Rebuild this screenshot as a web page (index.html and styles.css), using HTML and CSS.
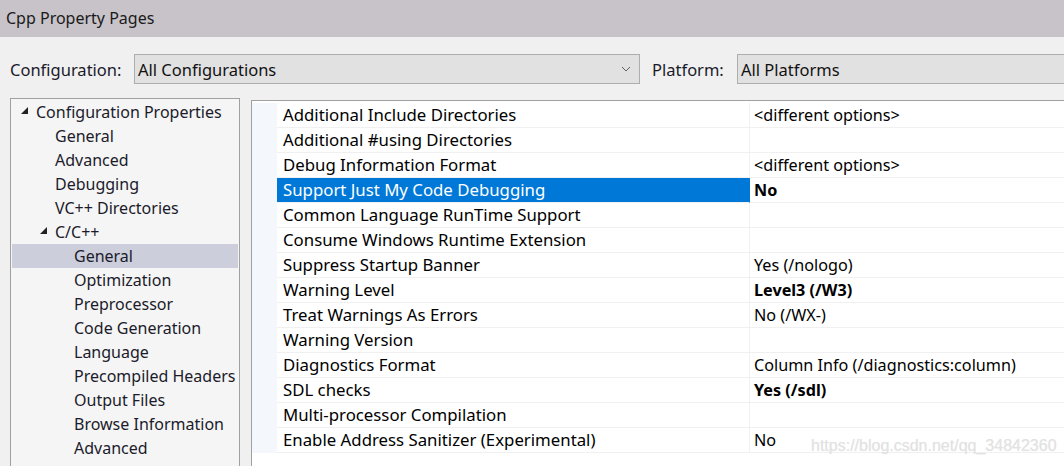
FILE: index.html
```html
<!DOCTYPE html>
<html>
<head>
<meta charset="utf-8">
<link rel="stylesheet" href="styles.css">
</head>
<body>
<div class="window">
  <div class="titlebar">Cpp Property Pages</div>
  <div class="config-row">
    <span class="label">Configuration:</span>
    <div class="combo combo-config">
      <span>All Configurations</span>
      <svg class="chev" width="10" height="6" viewBox="0 0 10 6"><path d="M1 1 L5 5 L9 1" fill="none" stroke="#606060" stroke-width="1"/></svg>
    </div>
    <span class="label label-platform">Platform:</span>
    <div class="combo combo-platform"><span>All Platforms</span></div>
  </div>
  <div class="main">
    <div class="tree">
      <div class="node lvl0"><span class="tri"><svg width="8" height="8" viewBox="0 0 8 8"><polygon points="7,0 7,7 0,7" fill="#222"/></svg></span><span>Configuration Properties</span></div>
      <div class="node lvl1"><span class="tri"></span><span>General</span></div>
      <div class="node lvl1"><span class="tri"></span><span>Advanced</span></div>
      <div class="node lvl1"><span class="tri"></span><span>Debugging</span></div>
      <div class="node lvl1"><span class="tri"></span><span>VC++ Directories</span></div>
      <div class="node lvl1"><span class="tri"><svg width="8" height="8" viewBox="0 0 8 8"><polygon points="7,0 7,7 0,7" fill="#222"/></svg></span><span>C/C++</span></div>
      <div class="node lvl2 selected"><span class="tri"></span><span>General</span></div>
      <div class="node lvl2"><span class="tri"></span><span>Optimization</span></div>
      <div class="node lvl2"><span class="tri"></span><span>Preprocessor</span></div>
      <div class="node lvl2"><span class="tri"></span><span>Code Generation</span></div>
      <div class="node lvl2"><span class="tri"></span><span>Language</span></div>
      <div class="node lvl2"><span class="tri"></span><span>Precompiled Headers</span></div>
      <div class="node lvl2"><span class="tri"></span><span>Output Files</span></div>
      <div class="node lvl2"><span class="tri"></span><span>Browse Information</span></div>
      <div class="node lvl2"><span class="tri"></span><span>Advanced</span></div>
    </div>
    <div class="grid">
      <div class="row"><div class="margin"></div><div class="name">Additional Include Directories</div><div class="value">&lt;different options&gt;</div></div>
      <div class="row"><div class="margin"></div><div class="name">Additional #using Directories</div><div class="value"></div></div>
      <div class="row"><div class="margin"></div><div class="name">Debug Information Format</div><div class="value">&lt;different options&gt;</div></div>
      <div class="row active"><div class="margin"></div><div class="name">Support Just My Code Debugging</div><div class="value bold">No</div></div>
      <div class="row"><div class="margin"></div><div class="name">Common Language RunTime Support</div><div class="value"></div></div>
      <div class="row"><div class="margin"></div><div class="name">Consume Windows Runtime Extension</div><div class="value"></div></div>
      <div class="row"><div class="margin"></div><div class="name">Suppress Startup Banner</div><div class="value">Yes (/nologo)</div></div>
      <div class="row"><div class="margin"></div><div class="name">Warning Level</div><div class="value bold">Level3 (/W3)</div></div>
      <div class="row"><div class="margin"></div><div class="name">Treat Warnings As Errors</div><div class="value">No (/WX-)</div></div>
      <div class="row"><div class="margin"></div><div class="name">Warning Version</div><div class="value"></div></div>
      <div class="row"><div class="margin"></div><div class="name">Diagnostics Format</div><div class="value">Column Info (/diagnostics:column)</div></div>
      <div class="row"><div class="margin"></div><div class="name">SDL checks</div><div class="value bold">Yes (/sdl)</div></div>
      <div class="row"><div class="margin"></div><div class="name">Multi-processor Compilation</div><div class="value"></div></div>
      <div class="row"><div class="margin"></div><div class="name">Enable Address Sanitizer (Experimental)</div><div class="value">No</div></div>
    </div>
  </div>
  <div class="watermark">https://blog.csdn.net/qq_34842360</div>
</div>
</body>
</html>
```
FILE: styles.css
```css
html, body {
  margin: 0;
  padding: 0;
}
body {
  background: #f0f0f0;
  font-family: "Noto Sans", "Open Sans", sans-serif;
  font-size: 16.5px;
  color: #000;
  overflow: hidden;
}
.window {
  position: relative;
  width: 1064px;
  height: 466px;
  overflow: hidden;
}
.titlebar {
  height: 37px;
  line-height: 37px;
  background: #c7c3c8;
  padding-left: 6px;
  font-size: 16px;
  color: #1a1a1a;
}
.config-row {
  display: flex;
  align-items: center;
  margin-top: 17px;
  padding-left: 10px;
  height: 30px;
  white-space: nowrap;
}
.label {
  flex: none;
  width: 124px;
  color: #1a1a2a;
}
.label-platform {
  width: 85px;
  margin-left: 12px;
}
.combo {
  flex: none;
  box-sizing: border-box;
  height: 30px;
  border: 1px solid #adadad;
  background: #e1e1e1;
  display: flex;
  align-items: center;
  padding-left: 3px;
  color: #111;
}
.combo-config {
  width: 506px;
  justify-content: space-between;
  padding-right: 8px;
}
.combo-platform {
  width: 400px;
}
.chev {
  display: block;
}
.main {
  display: flex;
  align-items: flex-start;
  margin-top: 14px;
  padding-left: 10px;
}
.tree {
  box-sizing: border-box;
  width: 230px;
  height: 400px;
  flex: none;
  border: 1px solid #a0a0a0;
  background: #f5f5f5;
  padding: 1px 1px 0 1px;
  color: #1b1b2b;
  font-size: 16px;
}
.node {
  display: flex;
  align-items: center;
  height: 24px;
  white-space: nowrap;
  overflow: hidden;
}
.node.lvl0 { padding-left: 9px; }
.node.lvl1 { padding-left: 28px; }
.node.lvl2 { padding-left: 47px; }
.node.selected { background: #cccedb; }
.tri {
  width: 15px;
  flex: none;
  display: flex;
  align-items: center;
  margin-top: -2px;
}
.tri svg { display: block; }
.grid {
  box-sizing: border-box;
  margin-left: 11px;
  margin-top: 2px;
  width: 900px;
  height: 400px;
  flex: none;
  background: #fff;
  border-top: 1px solid #a0a0a0;
  border-left: 1px solid #a0a0a0;
  padding-top: 2px;
}
.row {
  display: grid;
  grid-template-columns: 25px 473px 1fr;
  height: 25px;
  white-space: nowrap;
}
.margin {
  background: #f4f7fb;
}
.name {
  box-sizing: border-box;
  padding-left: 6px;
  line-height: 24px;
  font-size: 16.8px;
  border-bottom: 1px solid #f0f0f0;
  border-right: 1px solid #f0f0f0;
}
.value {
  padding-left: 4px;
  line-height: 24px;
  font-size: 16.2px;
  border-bottom: 1px solid #f0f0f0;
}
.bold { font-weight: 700; }
.row.active .name {
  background: #0078d7;
  color: #fff;
  border-right-color: #0078d7;
}
.watermark {
  position: absolute;
  left: 811px;
  top: 437px;
  font-family: "Liberation Sans", Arial, sans-serif;
  font-size: 16px;
  color: #e2e2e2;
  text-shadow: 0 0 1px #ececec;
}
```
